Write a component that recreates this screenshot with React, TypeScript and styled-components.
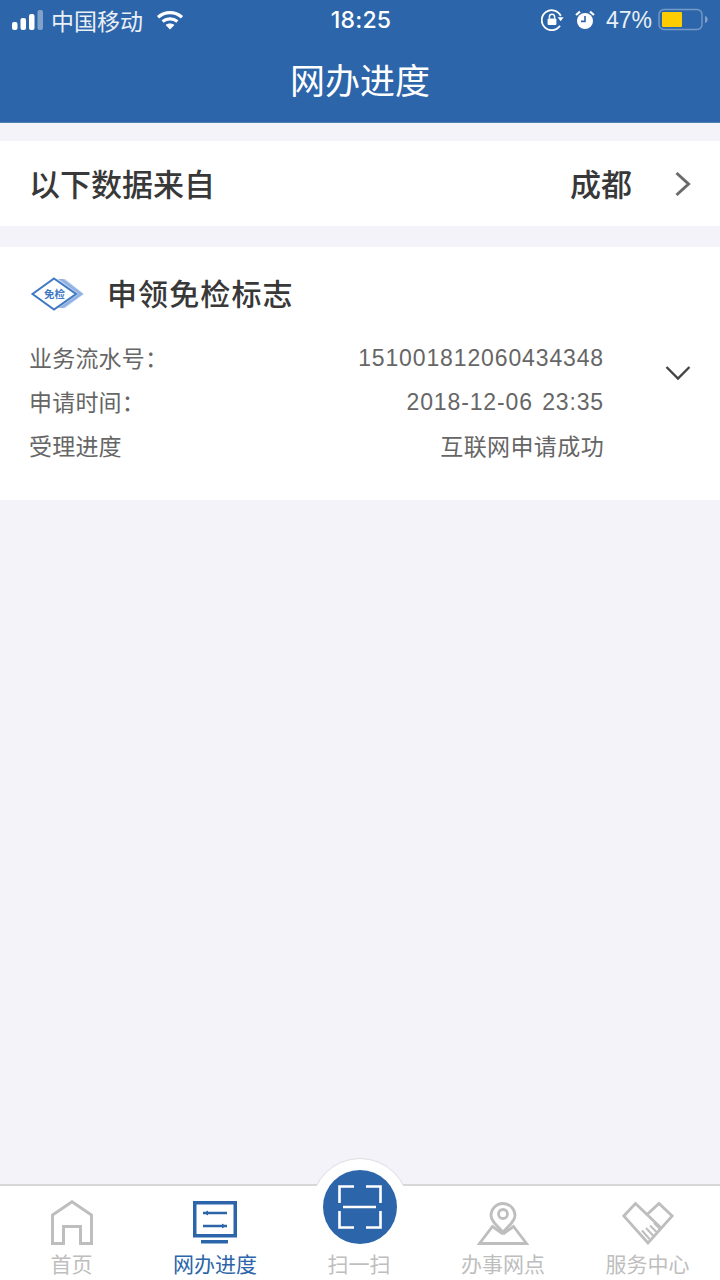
import React from 'react';
import styled, { createGlobalStyle } from 'styled-components';

const FONT = `"Liberation Sans", "Noto Sans CJK SC", sans-serif`;
const BLUE = '#2c65a9';
const GRAY = '#bebebe';

const GlobalStyle = createGlobalStyle`
  html, body {
    margin: 0;
    padding: 0;
    background: #f3f3f9;
    font-family: ${FONT};
  }
`;

const Page = styled.div`
  width: 720px;
  height: 1280px;
  display: flex;
  flex-direction: column;
  overflow: hidden;
  background: #f3f3f9;
`;

const Header = styled.header`
  height: 123px;
  flex: none;
  box-sizing: border-box;
  display: flex;
  flex-direction: column;
  background: ${BLUE};
  border-bottom: 1px solid #4d80b5;
  color: #fff;
`;

const StatusBar = styled.div`
  height: 40px;
  display: grid;
  grid-template-columns: 1fr auto 1fr;
  align-items: center;
  padding: 0 10px 0 12px;
`;

const StatusLeft = styled.div`
  display: flex;
  align-items: center;
`;

const Carrier = styled.span`
  font-size: 23px;
  margin-left: 7px;
  color: #e9eff6;
`;

const WifiIcon = styled.svg`
  margin-left: 13px;
`;

const Clock = styled.span`
  font-family: Inter, ${FONT};
  font-size: 23px;
  font-weight: 500;
  letter-spacing: 0.2px;
  margin-bottom: 1px;
`;

const StatusRight = styled.div`
  display: flex;
  align-items: center;
  justify-content: flex-end;
  gap: 11px;
`;

const Percent = styled.span`
  font-size: 23px;
  margin-right: -5px;
  color: #e9eff6;
`;

const Title = styled.h1`
  margin: 0;
  flex: 1;
  display: flex;
  align-items: center;
  justify-content: center;
  padding-bottom: 5px;
  font-size: 35px;
  font-weight: 400;
`;

const SourceRow = styled.div`
  margin-top: 18px;
  height: 85px;
  display: flex;
  align-items: center;
  padding: 0 28px 3px 29px;
  box-sizing: border-box;
  background: #fff;
  color: #383838;
  font-size: 31px;
  font-weight: 500;
`;

const SourceLabel = styled.span`
  flex: 1;
`;

const SourceCity = styled.span`
  margin-right: 42px;
`;

const ChevronIcon = styled.svg`
  margin-top: 3px;
`;

const Card = styled.section`
  margin-top: 21px;
  height: 253px;
  flex: none;
  background: #fff;
  padding: 0 29px 0 29px;
  box-sizing: border-box;
`;

const CardHead = styled.div`
  height: 90px;
  display: flex;
  align-items: center;
  gap: 22px;
`;

const BadgeIcon = styled.svg`
  margin-top: 4px;
`;

const CardTitle = styled.span`
  font-size: 30px;
  font-weight: 500;
  color: #383838;
  letter-spacing: 1.1px;
`;

const CardBody = styled.div`
  display: flex;
  align-items: center;
  margin-top: -2px;
`;

const Rows = styled.div`
  width: 576px;
  display: flex;
  flex-direction: column;
`;

const InfoRow = styled.div`
  height: 44px;
  display: flex;
  align-items: center;
  justify-content: space-between;
  font-size: 23px;
  color: #666;
`;

const InfoLabel = styled.span`
  letter-spacing: 0.2px;
`;

const InfoValue = styled.span<{ $digits?: boolean }>`
  letter-spacing: ${(p) => (p.$digits ? '0.87px' : '0.4px')};
  word-spacing: ${(p) => (p.$digits ? '2px' : '0')};
  padding-top: ${(p) => (p.$digits ? '2px' : '0')};
`;

const ToggleIcon = styled.svg`
  margin-left: 61px;
  margin-bottom: 56px;
`;

const Spacer = styled.div`
  flex: 1;
`;

const TabBar = styled.nav`
  position: relative;
  height: 96px;
  flex: none;
  box-sizing: border-box;
  display: grid;
  grid-template-columns: 143px 144px 144px 144px 145px;
  background: #fff;
  border-top: 2px solid #d7d7da;
`;

const Tab = styled.div<{ $active?: boolean }>`
  position: relative;
  display: flex;
  flex-direction: column;
  align-items: center;
  justify-content: flex-end;
  padding-bottom: 1px;
  font-size: 21px;
  line-height: 28px;
  color: ${(p) => (p.$active ? BLUE : GRAY)};
`;

const TabIcon = styled.svg`
  flex: none;
  margin-bottom: 6px;
`;

const ScanHump = styled.div`
  position: absolute;
  top: -28px;
  left: calc(50% + 1px);
  margin-left: -49px;
  width: 98px;
  height: 98px;
  box-sizing: border-box;
  border-radius: 50%;
  background: #fff;
  border: 1px solid #dcdcdf;
  clip-path: inset(0 0 70px 0);
`;

const ScanButton = styled.div`
  position: absolute;
  top: -16px;
  left: calc(50% + 1px);
  margin-left: -37px;
  width: 74px;
  height: 74px;
  display: flex;
  align-items: center;
  justify-content: center;
  border-radius: 50%;
  background: ${BLUE};
`;

const Signal = () => (
  <svg width="32" height="20" viewBox="0 0 32 20">
    <rect x="0" y="12" width="5.5" height="8" rx="2" fill="#fff" />
    <rect x="8.5" y="8" width="5.5" height="12" rx="2" fill="#fff" />
    <rect x="17" y="4" width="5.5" height="16" rx="2" fill="#fff" />
    <rect x="25.5" y="0" width="5.5" height="20" rx="2" fill="#fff" fillOpacity="0.4" />
  </svg>
);

const Wifi = () => (
  <WifiIcon width="28" height="20" viewBox="0 0 28 20" fill="none" stroke="#fff" strokeWidth="3.2">
    <path d="M2 7.2 C9 1 19 1 26 7.2" />
    <path d="M6.6 11.6 C11 8 17 8 21.4 11.6" />
    <path d="M14 19.5 L9.6 15 C12 13 16 13 18.4 15 Z" fill="#fff" stroke="none" />
  </WifiIcon>
);

const RotationLock = () => (
  <svg width="23" height="22" viewBox="0 0 23 22" fill="none">
    <path d="M19 16.8 A10 10 0 1 1 19.8 7" stroke="#fff" strokeWidth="1.8" />
    <path d="M16.6 8.2 L22.6 8.2 L19.6 12.2 Z" fill="#fff" />
    <rect x="6.6" y="9.4" width="8.8" height="6.6" rx="1" fill="#fff" />
    <path d="M8.4 9.6 V7.8 A2.6 2.6 0 0 1 13.6 7.8 V9.6" stroke="#fff" strokeWidth="1.5" />
  </svg>
);

const Alarm = () => (
  <svg width="20" height="20" viewBox="0 0 20 20" fill="none">
    <circle cx="10" cy="11" r="8" fill="#fff" />
    <path d="M10 6 V11.4 H6" stroke={BLUE} strokeWidth="1.6" />
    <path d="M1 5 L5 1.6 M19 5 L15 1.6" stroke="#fff" strokeWidth="2.2" />
  </svg>
);

const Battery = () => (
  <svg width="52" height="24" viewBox="0 0 52 24">
    <rect x="1" y="1.5" width="43" height="20" rx="5" fill="none" stroke="#fff" strokeOpacity="0.35" strokeWidth="1.4" />
    <rect x="4" y="4" width="20" height="15" rx="1" fill="#ffcc00" />
    <path d="M47 8 C49 8.6 49.6 10 49.6 11.5 C49.6 13 49 14.4 47 15 Z" fill="#fff" fillOpacity="0.4" />
  </svg>
);

const Chevron = () => (
  <ChevronIcon width="18" height="28" viewBox="0 0 18 28" fill="none">
    <path d="M2.5 3 L14.5 14 L2.5 25" stroke="#6a6a6a" strokeWidth="3" />
  </ChevronIcon>
);

const PermitBadge = () => (
  <BadgeIcon width="56" height="36" viewBox="0 0 56 36" fill="none">
    <path d="M28 3 H36 L55 18 L36 32 H28 L47 18 Z" fill="#bcd0ee" />
    <path d="M30 3 H34 L54 18 L34 32 H30 L50 18 Z" fill="#8fb0e0" />
    <path d="M25 2.5 L47 18 L25 33.5 L3.5 18 Z" fill="#fff" stroke="#3f78c4" strokeWidth="2" />
    <text x="25.5" y="22" textAnchor="middle" fontSize="10.5" fontWeight="700" fill="#3f78c4" fontFamily={FONT}>
      免检
    </text>
  </BadgeIcon>
);

const HomeGlyph = () => (
  <TabIcon width="42" height="45" viewBox="0 0 42 45" fill="none" stroke={GRAY} strokeWidth="3">
    <path d="M1.5 43.5 V15 L21 1.8 L40.5 15 V43.5 H29.5 V26.5 H12.5 V43.5 Z" />
  </TabIcon>
);

const ProgressGlyph = () => (
  <TabIcon width="44" height="44" viewBox="0 0 44 44" fill="none">
    <rect x="1.75" y="1.75" width="40.5" height="33" stroke={BLUE} strokeWidth="3.5" />
    <path d="M10 12 H34 M10 25 H34" stroke={BLUE} strokeWidth="2.6" />
    <path d="M15 9.5 L11 12 L15 14.5 Z M29 22.5 L33 25 L29 27.5 Z" fill={BLUE} />
    <rect x="8" y="39" width="27" height="3.5" fill={BLUE} />
  </TabIcon>
);

const ScanGlyph = () => (
  <svg width="44" height="44" viewBox="0 0 44 44" fill="none" stroke="#fff" strokeWidth="2.6">
    <path d="M16 1.5 H1.5 V18 M28 1.5 H42.5 V18 M16 42.5 H1.5 V26 M28 42.5 H42.5 V26" />
    <path d="M5 22 H38" />
  </svg>
);

const MapGlyph = () => (
  <TabIcon width="52" height="44" viewBox="0 0 52 44" fill="none" stroke={GRAY} strokeWidth="2.8">
    <path d="M26 31 C20 25 14 20 14 14.5 A12 12 0 0 1 38 14.5 C38 20 32 25 26 31 Z" />
    <circle cx="26" cy="13" r="4.5" />
    <path d="M26 33 L15.5 25.5 L2.5 42.5 H49.5 L36.5 25.5 L26 33" />
  </TabIcon>
);

const ServiceGlyph = () => (
  <TabIcon width="52" height="44" viewBox="0 0 52 44" fill="none" stroke={GRAY} strokeWidth="2.8">
    <path d="M26 42 L1.8 15 L13.5 2.5 L25 13.5 L37 2.5 L50.2 15 Z" />
    <path d="M25 13.5 L38.5 26.5" />
    <path d="M20 29.5 L27.5 38 M24 27 L31.5 35 M28 24.5 L35 31.5 M32 22 L38 28" strokeWidth="2" />
  </TabIcon>
);

export default function App() {
  return (
    <Page>
      <GlobalStyle />
      <Header>
        <StatusBar>
          <StatusLeft>
            <Signal />
            <Carrier>中国移动</Carrier>
            <Wifi />
          </StatusLeft>
          <Clock>18:25</Clock>
          <StatusRight>
            <RotationLock />
            <Alarm />
            <Percent>47%</Percent>
            <Battery />
          </StatusRight>
        </StatusBar>
        <Title>网办进度</Title>
      </Header>

      <SourceRow>
        <SourceLabel>以下数据来自</SourceLabel>
        <SourceCity>成都</SourceCity>
        <Chevron />
      </SourceRow>

      <Card>
        <CardHead>
          <PermitBadge />
          <CardTitle>申领免检标志</CardTitle>
        </CardHead>
        <CardBody>
          <Rows>
            <InfoRow>
              <InfoLabel>业务流水号：</InfoLabel>
              <InfoValue $digits>151001812060434348</InfoValue>
            </InfoRow>
            <InfoRow>
              <InfoLabel>申请时间：</InfoLabel>
              <InfoValue $digits>2018-12-06 23:35</InfoValue>
            </InfoRow>
            <InfoRow>
              <InfoLabel>受理进度</InfoLabel>
              <InfoValue>互联网申请成功</InfoValue>
            </InfoRow>
          </Rows>
          <ToggleIcon width="26" height="16" viewBox="0 0 26 16" fill="none">
            <path d="M1.5 2 L13 13.5 L24.5 2" stroke="#444" strokeWidth="2.4" />
          </ToggleIcon>
        </CardBody>
      </Card>

      <Spacer />

      <TabBar>
        <Tab>
          <HomeGlyph />
          首页
        </Tab>
        <Tab $active>
          <ProgressGlyph />
          网办进度
        </Tab>
        <Tab>
          <ScanHump />
          <ScanButton>
            <ScanGlyph />
          </ScanButton>
          扫一扫
        </Tab>
        <Tab>
          <MapGlyph />
          办事网点
        </Tab>
        <Tab>
          <ServiceGlyph />
          服务中心
        </Tab>
      </TabBar>
    </Page>
  );
}
